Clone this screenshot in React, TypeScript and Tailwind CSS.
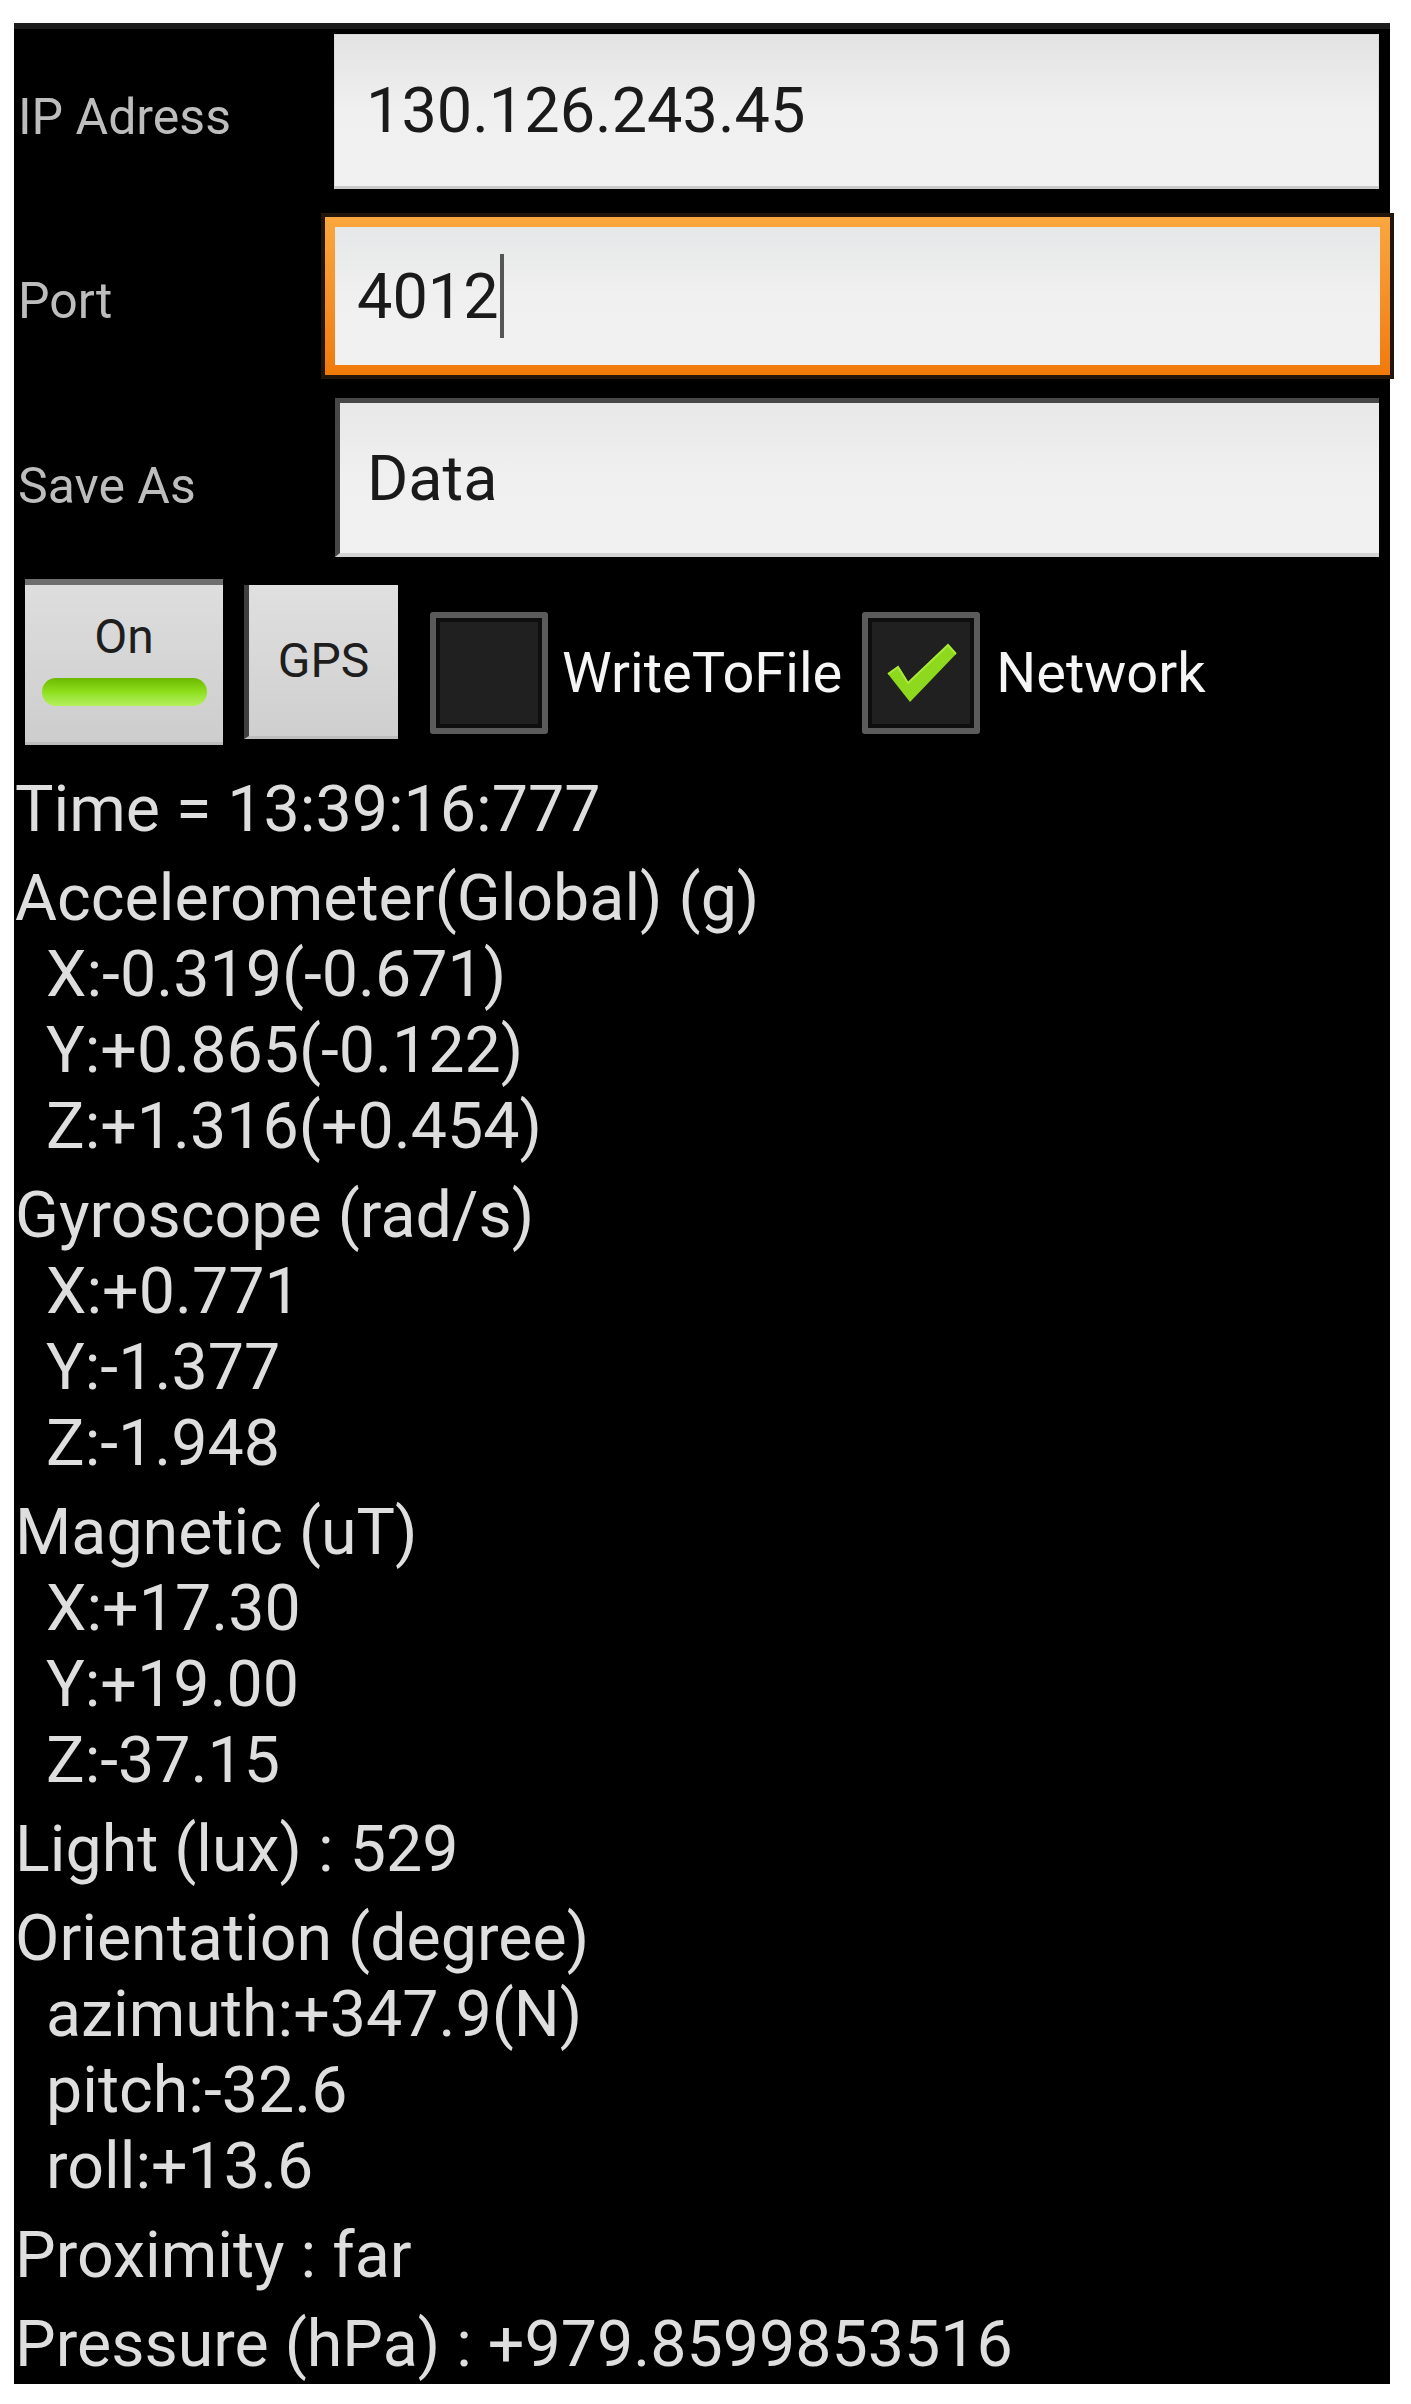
import React from "react";

const font = { fontFamily: "Roboto, 'Noto Sans', 'Liberation Sans', sans-serif" };

type Block = { head: string; subs: string[] };

const blocks: Block[] = [
  { head: "Time = 13:39:16:777", subs: [] },
  { head: "Accelerometer(Global) (g)", subs: ["X:-0.319(-0.671)", "Y:+0.865(-0.122)", "Z:+1.316(+0.454)"] },
  { head: "Gyroscope (rad/s)", subs: ["X:+0.771", "Y:-1.377", "Z:-1.948"] },
  { head: "Magnetic (uT)", subs: ["X:+17.30", "Y:+19.00", "Z:-37.15"] },
  { head: "Light (lux) : 529", subs: [] },
  { head: "Orientation (degree)", subs: ["azimuth:+347.9(N)", "pitch:-32.6", "roll:+13.6"] },
  { head: "Proximity : far", subs: [] },
  { head: "Pressure (hPa) : +979.8599853516", subs: [] },
];

function CheckBox({ checked }: { checked: boolean }) {
  return (
    <div className="relative w-[118px] h-[122px] rounded-[3px] border-[6px] border-[#5b5b5b] bg-[#202020] shadow-[inset_0_0_0_4px_#0e0e0e]">
      {checked && (
        <svg className="absolute left-0 top-0" width="106" height="110" viewBox="0 0 106 110">
          <path d="M20 56 L30 49 L40 65 L80 27 L88 36 L42 84 Z" fill="#8ed81e" />
          <path d="M20 56 L30 49 L40 65 L80 27 L88 36" fill="none" stroke="#a9ea3a" strokeWidth="2" />
        </svg>
      )}
    </div>
  );
}

export default function App() {
  return (
    <div className="w-[1411px] min-h-[2404px] bg-white pt-[23px] pl-[14px]" style={font}>
      <div className="w-[1376px] h-[2361px] bg-black border-t-[6px] border-[#1c1c1c]">
        {/* IP row */}
        <div className="flex pt-[5px]">
          <div className="w-[320px] h-[155px] flex items-center pl-[4px] pt-[10px] text-[50px] leading-none text-[#bdbdbd]">
            IP Adress
          </div>
          <div className="w-[1045px] h-[155px] flex items-center pl-[31px] bg-gradient-to-b from-[#e3e3e3] via-[#f0f0f0] to-[#f1f1f1] border border-[#d9d9d9] border-b-[3px] border-b-[#c9c9c9] text-[63px] leading-none text-[#1a1a1a]">
            130.126.243.45
          </div>
        </div>

        {/* Port row */}
        <div className="flex mt-[28px]">
          <div className="w-[311px] h-[158px] flex items-center pl-[4px] pt-[10px] text-[50px] leading-none text-[#bdbdbd]">
            Port
          </div>
          <div className="w-[1065px] h-[158px] p-[10px] bg-gradient-to-b from-[#f9a73e] to-[#f07a08] shadow-[0_0_0_4px_#22150a]">
            <div className="w-full h-full flex items-center pl-[22px] bg-gradient-to-b from-[#e6e7e8] via-[#f0f0f0] to-[#f1f1f1] text-[63px] leading-none text-[#1a1a1a]">
              <span>4012</span>
              <span className="inline-block w-[4px] h-[84px] bg-[#555555] ml-[1px]"></span>
            </div>
          </div>
        </div>

        {/* Save As row */}
        <div className="flex mt-[23px]">
          <div className="w-[321px] h-[159px] flex items-center pl-[4px] pt-[16px] text-[50px] leading-none text-[#bdbdbd]">
            Save As
          </div>
          <div className="w-[1044px] h-[159px] flex items-center pl-[27px] bg-gradient-to-b from-[#e8e8e8] via-[#f0f0f0] to-[#f1f1f1] border-t-[5px] border-l-[5px] border-[#474747] border-b-[4px] border-b-[#d3d3d3] text-[63px] leading-none text-[#1a1a1a]">
            Data
          </div>
        </div>

        {/* Buttons row */}
        <div className="flex items-start mt-[22px] pl-[11px]">
          <div className="w-[198px] h-[166px] flex flex-col items-center border-t-[6px] border-[#6e6e6e] border-b-[3px] border-b-[#bcbcbc] bg-gradient-to-b from-[#dedede] to-[#cdcdcd] pt-[28px]">
            <span className="text-[48px] leading-none text-[#1e1e1e]">On</span>
            <div className="mt-[17px] w-[165px] h-[28px] rounded-full bg-gradient-to-b from-[#6cb800] via-[#8fe01c] to-[#b4f05a]"></div>
          </div>
          <div className="ml-[21px] mt-[6px] w-[154px] h-[154px] flex items-center justify-center border-l-[5px] border-[#3e3e3e] border-b-[3px] border-b-[#bdbdbd] bg-gradient-to-b from-[#e0e0e0] to-[#cfcfcf] text-[48px] leading-none text-[#1e1e1e]">
            GPS
          </div>
          <div className="ml-[32px] mt-[33px] flex items-center">
            <CheckBox checked={false} />
            <span className="ml-[14px] text-[56px] leading-none text-[#f5f5f5]">WriteToFile</span>
          </div>
          <div className="ml-[20px] mt-[33px] flex items-center">
            <CheckBox checked={true} />
            <span className="ml-[16px] text-[56px] leading-none text-[#f5f5f5]">Network</span>
          </div>
        </div>

        {/* Sensor text */}
        <div className="mt-[26px] text-[64.5px] leading-[76px] text-[#dedede]">
          {blocks.map((b, i) => (
            <div key={i} className={i === 0 ? "" : "mt-[13px]"}>
              <div className="pl-[1px] whitespace-nowrap">{b.head}</div>
              {b.subs.map((s, j) => (
                <div key={j} className="pl-[32px] whitespace-nowrap">
                  {s}
                </div>
              ))}
            </div>
          ))}
        </div>
      </div>
    </div>
  );
}
